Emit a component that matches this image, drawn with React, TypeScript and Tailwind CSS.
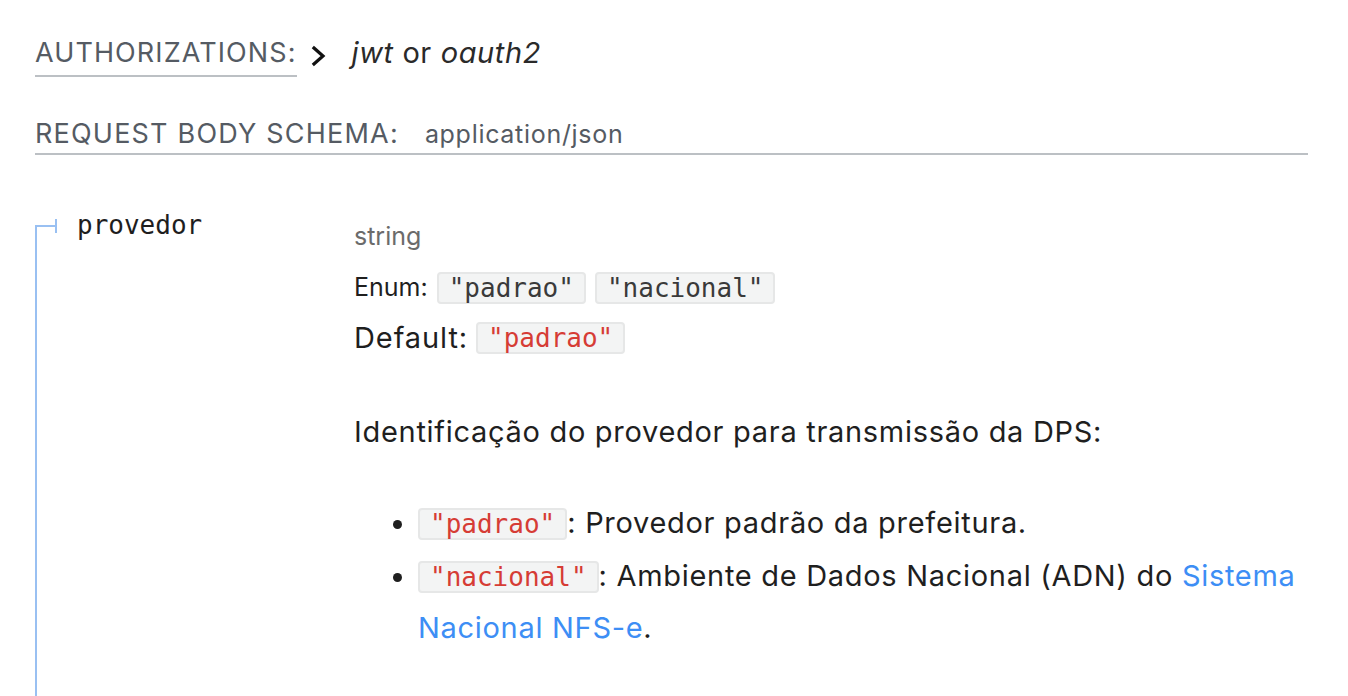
import React from "react";

const sans = { fontFamily: "Inter, 'Noto Sans', sans-serif" };

function Code({ children, red }: { children: React.ReactNode; red?: boolean }) {
  return (
    <code
      className={
        "inline-block rounded-[4px] border-2 border-[#e6e7e7] bg-[#f3f4f4] px-[10px] text-[26px] leading-[28px] tracking-normal font-['DejaVu_Sans_Mono',monospace] " +
        (red ? "text-[#d63c35]" : "text-[#3a3a3a]")
      }
    >
      {children}
    </code>
  );
}

function Chevron() {
  return (
    <svg width="16" height="22" viewBox="0 0 16 22" fill="none" className="ml-[14px] mr-[25px]">
      <path d="M3 3 L12 11 L3 19" stroke="#111" strokeWidth="3.2" strokeLinecap="square" />
    </svg>
  );
}

export default function App() {
  return (
    <div className="min-h-screen bg-white pl-[35px] pr-[40px] pt-[34px] font-['Inter',sans-serif]" style={sans}>
      {/* authorizations */}
      <div className="flex items-center">
        <span className="inline-block border-b-2 border-[#bcc0c4] pb-[3px] text-[27px] leading-[38px] tracking-[1.1px] text-[#555b63]">
          AUTHORIZATIONS:
        </span>
        <Chevron />
        <span className="-mt-[6px] text-[29px] leading-[38px] tracking-[0.6px] text-[#2a2a2a]">
          <i>jwt</i> or <i>oauth2</i>
        </span>
      </div>

      {/* request body */}
      <div className="mt-[38px] flex items-center border-b-2 border-[#bcc0c4]">
        <span className="text-[27px] leading-[38px] tracking-[1.2px] text-[#555b63]">REQUEST BODY SCHEMA:</span>
        <span className="ml-[26px] text-[25px] leading-[38px] tracking-[0.7px] text-[#555b63]">application/json</span>
      </div>

      {/* property row */}
      <div className="mt-[35px] flex">
        <div className="relative w-[319px] shrink-0 pt-[17px]">
          <div className="absolute left-0 top-[35px] h-[2px] w-[22px] bg-[#99c0f2]" />
          <div className="absolute left-[20px] top-[29px] h-[14px] w-[2px] bg-[#99c0f2]" />
          <div className="absolute left-0 top-[35px] bottom-0 w-[2px] bg-[#99c0f2]" />
          <span className="ml-[42px] text-[26px] leading-[36px] text-[#1e1e1e] font-['DejaVu_Sans_Mono',monospace]">
            provedor
          </span>
        </div>

        <div className="flex-1 pt-[28px] pb-[80px] text-[#1f1f1f]">
          <div className="text-[25px] leading-[36px] text-[#6b6b6b]">string</div>

          <div className="mt-[16px] flex h-[36px] items-center">
            <span className="text-[25px]">Enum:</span>
            <span className="ml-[9px]">
              <Code>"padrao"</Code>
            </span>
            <span className="ml-[9px]">
              <Code>"nacional"</Code>
            </span>
          </div>

          <div className="mt-[12px] flex h-[40px] items-center">
            <span className="text-[29px] tracking-[0.9px]">Default:</span>
            <span className="ml-[8px]">
              <Code red>"padrao"</Code>
            </span>
          </div>

          <p className="mt-[48px] text-[29px] leading-[52px] tracking-[0.7px]">
            Identificação do provedor para transmissão da DPS:
          </p>

          <ul className="mt-[39px] list-disc pl-[64px] text-[29px] leading-[52.5px] tracking-[0.7px]">
            <li>
              <Code red>"padrao"</Code>: Provedor padrão da prefeitura.
            </li>
            <li>
              <Code red>"nacional"</Code>: Ambiente de Dados Nacional (ADN) do{" "}
              <a className="text-[#3d8ef5]" href="#">
                Sistema Nacional NFS-e
              </a>
              .
            </li>
          </ul>
        </div>
      </div>
    </div>
  );
}
